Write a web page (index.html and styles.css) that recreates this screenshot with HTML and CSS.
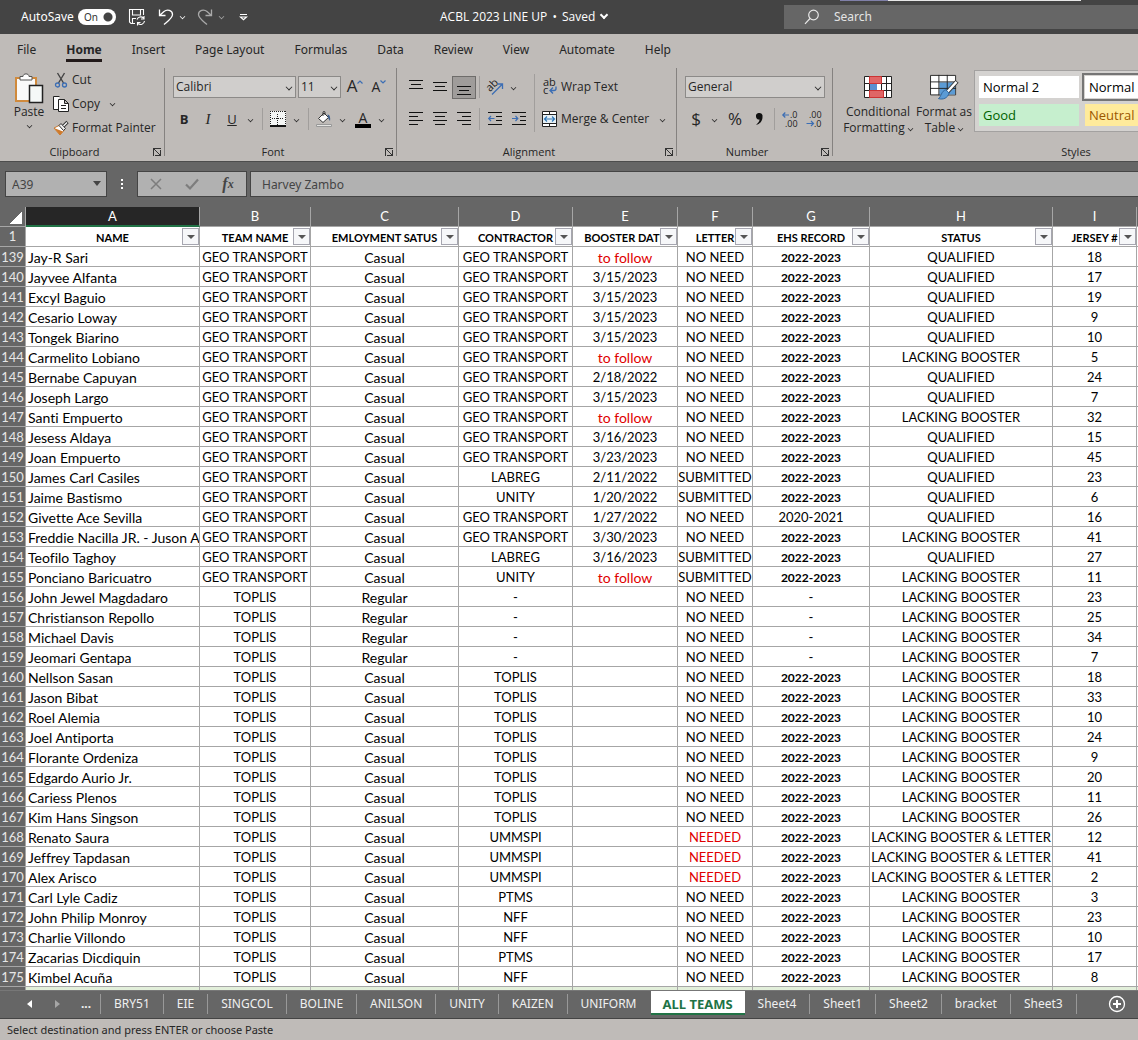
FILE: index.html
```html
<!DOCTYPE html>
<html lang="en">
<head>
    <meta charset="UTF-8">
    <meta name="viewport" content="width=device-width, initial-scale=1.0">
    <title>ACBL 2023 LINE UP</title>
    <link rel="stylesheet" href="styles.css">
</head>
<body>
    <header class="titlebar">
        <div class="quick">
            <label for="autosave">AutoSave</label>
            <span class="toggle"><input type="checkbox" id="autosave" checked><span class="toggle-text">On</span></span>
            <button class="quick-save" aria-label="Save">
                <svg width="18" height="18" viewBox="0 0 18 18" fill="none" stroke="#fff" stroke-width="1.1"><path d="M7 15.500H3L1.500 14V1.500H15.500V7M4.500 1.500V7H12.500V1.500M4.500 15.500V10.500H8M9 11.500A4 4 0 0 1 15.500 10M16 8V11H13M16.500 13A4 4 0 0 1 10 15.500M9.500 17.500V14.500H12.500"/></svg>
            </button>
            <button class="quick-undo" aria-label="Undo">
                <svg width="16" height="18" viewBox="0 0 16 18" fill="none" stroke="#fff" stroke-width="1.300"><path d="M1.500 1.500V7.500H7.500M1.500 7.500L6 3.500C9 1 14.500 2 14.500 6.500C14.500 10 10 13 6 16.500"/></svg>
            </button>
            <span class="chev light"></span>
            <button class="quick-redo" aria-label="Redo">
                <svg width="16" height="18" viewBox="0 0 16 18" fill="none" stroke="#a9a9a9" stroke-width="1.300"><path d="M14.500 1.500V7.500H8.500M14.500 7.500L10 3.500C7 1 1.500 2 1.500 6.500C1.500 10 6 13 10 16.500"/></svg>
            </button>
            <span class="chev light dim"></span>
            <button class="quick-more" aria-label="Customize Quick Access Toolbar">
                <svg width="9" height="8" viewBox="0 0 9 8" fill="none" stroke="#fff" stroke-width="1.200"><path d="M1 1.500H8M1.500 4L4.500 6.800L7.500 4Z"/></svg>
            </button>
        </div>
        <div class="doc-title">ACBL 2023 LINE UP <span class="dot">•</span> Saved <span class="chev light bold"></span></div>
        <div class="search">
            <svg width="16" height="16" viewBox="0 0 16 16" fill="none" stroke="#e8e8e8" stroke-width="1.200"><circle cx="9.500" cy="6" r="4.800"/><path d="M6 9.500L1 14.800"/></svg>
            <input type="text" placeholder="Search" aria-label="Search">
        </div>
        <span class="edge"></span>
    </header>

    <nav class="menu">
        <a href="#">File</a>
        <a href="#" class="current">Home</a>
        <a href="#">Insert</a>
        <a href="#">Page Layout</a>
        <a href="#">Formulas</a>
        <a href="#">Data</a>
        <a href="#">Review</a>
        <a href="#">View</a>
        <a href="#">Automate</a>
        <a href="#">Help</a>
    </nav>

    <div class="ribbon">
        <section class="group clipboard">
            <div class="group-body">
                <button class="paste">
                    <svg width="30" height="32" viewBox="0 0 30 32"><path d="M2 6H22V29H2Z" fill="#fafafa" stroke="#d08a3c" stroke-width="2"/><path d="M6 8V4.500H9C9 1 15 1 15 4.500H18V8Z" fill="#fff" stroke="#555"/><path d="M15.500 13.500H28.500V30.500H15.500Z" fill="#f5f8f7" stroke="#222" stroke-width="1.500"/></svg>
                    <span>Paste</span>
                    <span class="chev"></span>
                </button>
                <div class="clip-list">
                    <button>
                        <svg width="16" height="16" viewBox="0 0 16 16" fill="none"><path d="M4.500 1L10.500 11M11.500 1L5.500 11" stroke="#444" stroke-width="1.400"/><circle cx="4.500" cy="13" r="2" stroke="#3c6eb4" stroke-width="1.300"/><circle cx="11.500" cy="13" r="2" stroke="#3c6eb4" stroke-width="1.300"/></svg>
                        Cut
                    </button>
                    <button>
                        <svg width="16" height="16" viewBox="0 0 16 16" fill="#fff" stroke="#222"><path d="M5.500 13.500H.5V.5H6.500"/><path d="M5.500 3.500H11.500L15.500 7.500V15.500H5.500ZM11.500 3.500V7.500H15.500M8 9.500H13M8 12.500H13"/></svg>
                        Copy <span class="chev far"></span>
                    </button>
                    <button>
                        <svg width="16" height="16" viewBox="0 0 16 16"><path d="M1 8L7 5L11.500 10L7 15Z" fill="#fff" stroke="#c77a33"/><path d="M1 8L10 11.500L7 15Z" fill="#cf7a2b"/><path d="M6 5.500L8 3.500L12.500 8.500L10.500 10.500Z" fill="#eee" stroke="#333"/><path d="M10.500 6L14.500 2" stroke="#333" stroke-width="3.200"/><path d="M10.500 6L14 2.500" stroke="#fff" stroke-width="1.200"/></svg>
                        Format Painter
                    </button>
                </div>
            </div>
            <div class="group-name">Clipboard<button class="launcher" aria-label="Clipboard settings"></button></div>
        </section>

        <section class="group font">
            <div class="group-body rows">
                <div class="row">
                    <span class="select-box font-name"><select aria-label="Font"><option>Calibri</option></select></span>
                    <span class="select-box font-size"><select aria-label="Font Size"><option>11</option></select></span>
                    <button class="tool grow" aria-label="Increase Font Size">A<svg width="6" height="4" viewBox="0 0 6 4" fill="none" stroke="#3c6eb4" stroke-width="1.200"><path d="M.5 3.500L3 1L5.500 3.500"/></svg></button>
                    <button class="tool shrink" aria-label="Decrease Font Size">A<svg width="6" height="4" viewBox="0 0 6 4" fill="none" stroke="#3c6eb4" stroke-width="1.200"><path d="M.5 .5L3 3L5.500 .5"/></svg></button>
                </div>
                <div class="row">
                    <button class="tool"><b>B</b></button>
                    <button class="tool"><i class="serif">I</i></button>
                    <button class="tool"><u>U</u></button>
                    <span class="drop"><span class="chev"></span></span>
                    <span class="sep"></span>
                    <button class="tool" aria-label="Borders">
                        <svg width="16" height="16" viewBox="0 0 16 16"><path d="M0 0H16V16H0Z" fill="#f4f6f5"/><path d="M.5 0V15M15.500 0V15M0 .5H16M7.500 3V14M2 7.500H14" stroke="#222" stroke-dasharray="1 1"/><path d="M0 15H16" stroke="#111" stroke-width="2"/></svg>
                    </button>
                    <span class="drop"><span class="chev"></span></span>
                    <span class="sep"></span>
                    <button class="tool" aria-label="Fill Color">
                        <svg width="16" height="16" viewBox="0 0 16 16" fill="none"><path d="M2.500 7.500L8 2L12.500 6.500L7 11.500Z" fill="#fff" stroke="#333"/><path d="M7 5V1.500C7 0 9 0 9 1.500V4" stroke="#333"/><path d="M11.500 3.500C14 3.500 14.500 7 14 10L12 7Z" fill="#3f5f8a"/><path d="M.5 13.500H15.500V15.500H.5Z" fill="#e4e4e2" stroke="#999"/></svg>
                    </button>
                    <span class="drop"><span class="chev"></span></span>
                    <button class="tool font-color" aria-label="Font Color"><span>A</span></button>
                    <span class="drop"><span class="chev"></span></span>
                </div>
            </div>
            <div class="group-name">Font<button class="launcher" aria-label="Font settings"></button></div>
        </section>

        <section class="group alignment">
            <div class="group-body">
                <div class="rows">
                    <div class="row">
                        <button class="tool" aria-label="Top Align"><svg width="14" height="16" viewBox="0 0 14 16" stroke="#111"><path d="M0 1.500H14M2 5.500H12M0 9.500H14"/></svg></button>
                        <button class="tool" aria-label="Middle Align"><svg width="14" height="16" viewBox="0 0 14 16" stroke="#111"><path d="M0 3.500H14M2 7.500H12M0 11.500H14"/></svg></button>
                        <button class="tool pressed" aria-label="Bottom Align"><svg width="14" height="16" viewBox="0 0 14 16" stroke="#111"><path d="M0 7.500H14M2 11.500H12M0 15.500H14"/></svg></button>
                        <span class="sep tight"></span>
                        <button class="tool" aria-label="Orientation"><svg width="18" height="18" viewBox="0 0 18 18" fill="none"><text x="0" y="11" transform="rotate(-45 6 8)" font-size="11" fill="#222">ab</text><path d="M6 16.500L16 6.500M11.500 6H16.500V11" stroke="#3c6eb4" stroke-width="1.300"/></svg></button>
                        <span class="drop"><span class="chev"></span></span>
                    </div>
                    <div class="row">
                        <button class="tool" aria-label="Align Left"><svg width="14" height="14" viewBox="0 0 14 14" stroke="#111"><path d="M0 .5H14M0 4.500H9M0 8.500H14M0 12.500H9"/></svg></button>
                        <button class="tool" aria-label="Center"><svg width="14" height="14" viewBox="0 0 14 14" stroke="#111"><path d="M0 .5H14M2 4.500H12M0 8.500H14M2 12.500H12"/></svg></button>
                        <button class="tool" aria-label="Align Right"><svg width="14" height="14" viewBox="0 0 14 14" stroke="#111"><path d="M0 .5H14M5 4.500H14M0 8.500H14M5 12.500H14"/></svg></button>
                        <span class="sep tight"></span>
                        <button class="tool" aria-label="Decrease Indent"><svg width="14" height="14" viewBox="0 0 14 14" fill="none" stroke="#111"><path d="M0 .5H14M8 4.500H14M8 8.500H14M0 12.500H14"/><path d="M6.500 6.500H.8M3 4L.7 6.500L3 9" stroke="#3c6eb4" stroke-width="1.200"/></svg></button>
                        <button class="tool" aria-label="Increase Indent"><svg width="14" height="14" viewBox="0 0 14 14" fill="none" stroke="#111"><path d="M0 .5H14M8 4.500H14M8 8.500H14M0 12.500H14"/><path d="M0 6.500H5.700M3.500 4L5.800 6.500L3.500 9" stroke="#3c6eb4" stroke-width="1.200"/></svg></button>
                    </div>
                </div>
                <span class="sep tall"></span>
                <div class="rows">
                    <div class="row">
                        <button class="wide"><svg width="18" height="18" viewBox="0 0 18 18" fill="none"><text x="2" y="8" font-size="11" fill="#222">ab</text><text x="2" y="16" font-size="11" fill="#222">c</text><path d="M15 8.500V10.500C15 12 14 12.500 13 12.500H9.500M12 9.500L9 12.500L12 15.500" stroke="#3c6eb4" stroke-width="1.400"/></svg>Wrap Text</button>
                    </div>
                    <div class="row">
                        <button class="wide"><svg width="18" height="16" viewBox="0 0 18 16" fill="none"><path d="M1.500 .5H15.500V15.500H1.500Z" fill="#fff" stroke="#222"/><path d="M1 3.500H16M1 12.500H16M8.500 0V3M8.500 13V16" stroke="#222"/><path d="M2 4H15V12H2Z" fill="#e6f0f5"/><path d="M3.500 8H13.500M6 5.500L3.500 8L6 10.500M11 5.500L13.500 8L11 10.500" stroke="#2e75b6" stroke-width="1.200"/></svg>Merge &amp; Center</button>
                        <span class="drop"><span class="chev"></span></span>
                    </div>
                </div>
            </div>
            <div class="group-name">Alignment<button class="launcher" aria-label="Alignment settings"></button></div>
        </section>

        <section class="group number">
            <div class="group-body rows">
                <div class="row">
                    <span class="select-box number-format"><select aria-label="Number Format"><option>General</option></select></span>
                </div>
                <div class="row">
                    <button class="tool large">$</button>
                    <span class="drop"><span class="chev"></span></span>
                    <button class="tool large percent">%</button>
                    <button class="tool" aria-label="Comma Style"><svg width="10" height="14" viewBox="0 0 10 14"><path d="M4.500 1A3.300 3.300 0 0 1 8.500 5C8.500 9 6 12 2 13C4 11 5.500 9.500 5.500 7.500A3.300 3.300 0 0 1 4.500 1Z" fill="#111"/></svg></button>
                    <span class="sep tight"></span>
                    <button class="tool" aria-label="Increase Decimal"><svg width="17" height="18" viewBox="0 0 17 18" fill="none"><path d="M7 5H.8M3.300 2.500L.8 5L3.300 7.500" stroke="#3c6eb4" stroke-width="1.200"/><text x="8" y="8" font-size="9" fill="#222">.0</text><text x="3" y="17" font-size="9" fill="#222">.00</text></svg></button>
                    <button class="tool" aria-label="Decrease Decimal"><svg width="17" height="18" viewBox="0 0 17 18" fill="none"><text x="3" y="8" font-size="9" fill="#222">.00</text><path d="M.5 13.500H7.500M5 11L7.500 13.500L5 16" stroke="#3c6eb4" stroke-width="1.200"/><text x="8" y="17" font-size="9" fill="#222">.0</text></svg></button>
                </div>
            </div>
            <div class="group-name">Number<button class="launcher" aria-label="Number settings"></button></div>
        </section>

        <section class="group styles">
            <div class="group-body">
                <button class="big">
                    <svg width="28" height="24" viewBox="0 0 28 24"><path d="M.5 1.500H27.500V22.500H.5Z" fill="#fff" stroke="#222"/><path d="M0 8.500H28M0 15.500H28M5.500 1V23M17.500 1V23M22.500 1V23" stroke="#222"/><path d="M5.500 1.500H17.500V8.500H5.500ZM5.500 15.500H19.500V22.500H5.500Z" fill="#e06666" stroke="#c33"/><path d="M6 9H13V15H6Z" fill="#5b8fd0"/></svg>
                    <span>Conditional<br>Formatting <span class="chev"></span></span>
                </button>
                <button class="big">
                    <svg width="30" height="28" viewBox="0 0 30 28"><path d="M.5 1.500H27.500V22.500H.5Z" fill="#fff" stroke="#222"/><path d="M10 9H27V22H10Z" fill="#5b9bd5"/><path d="M0 8.500H28M0 15.500H28M9.500 1V23M18.500 1V23" stroke="#222"/><path d="M29 8L18 20" stroke="#333" stroke-width="4.500"/><path d="M28.500 8.500L18 20" stroke="#fff" stroke-width="2.500"/><path d="M17 17L20.500 20.500C19 26 14 28 9 26.500C12 25 12 18 17 17Z" fill="#5b9bd5" stroke="#2d6299"/></svg>
                    <span>Format as<br>Table <span class="chev"></span></span>
                </button>
                <div class="gallery">
                    <button class="style-item">Normal 2</button>
                    <button class="style-item selected">Normal</button>
                    <button class="style-item good">Good</button>
                    <button class="style-item neutral">Neutral</button>
                </div>
            </div>
            <div class="group-name">Styles</div>
        </section>
    </div>

    <div class="formula-bar">
        <div class="name-box"><input type="text" value="A39" aria-label="Name Box"><span class="tri"></span></div>
        <div class="dots"><i></i><i></i><i></i></div>
        <div class="fx-box">
            <button aria-label="Cancel"><svg width="12" height="12" viewBox="0 0 12 12" stroke="#7d7d7d" stroke-width="1.500"><path d="M1 1L11 11M11 1L1 11"/></svg></button>
            <button aria-label="Enter"><svg width="14" height="12" viewBox="0 0 14 12" fill="none" stroke="#7d7d7d" stroke-width="2.200"><path d="M1 6.500L5 10.500L13 1.500"/></svg></button>
            <button class="fx" aria-label="Insert Function">f<sub>x</sub></button>
        </div>
        <input class="formula" type="text" value="Harvey Zambo" aria-label="Formula Bar">
    </div>

    <main class="sheet">
        <table>
            <colgroup>
                <col class="col-num"><col class="col-a"><col class="col-b"><col class="col-c"><col class="col-d"><col class="col-e"><col class="col-f"><col class="col-g"><col class="col-h"><col class="col-i"><col class="col-j">
            </colgroup>
            <thead>
                <tr class="letters"><th class="corner"></th><th class="active">A</th><th>B</th><th>C</th><th>D</th><th>E</th><th>F</th><th>G</th><th>H</th><th>I</th><th></th></tr>
                <tr class="titles" id="titles"></tr>
            </thead>
            <tbody id="rows"></tbody>
        </table>
    </main>

    <nav class="tabs">
        <button class="arrow left" aria-label="Previous sheet"></button>
        <button class="arrow right" aria-label="Next sheet"></button>
        <button class="more">...</button>
        <a href="#">BRY51</a>
        <a href="#">EIE</a>
        <a href="#">SINGCOL</a>
        <a href="#">BOLINE</a>
        <a href="#">ANILSON</a>
        <a href="#">UNITY</a>
        <a href="#">KAIZEN</a>
        <a href="#" class="before">UNIFORM</a>
        <a href="#" class="current">ALL TEAMS</a>
        <a href="#">Sheet4</a>
        <a href="#">Sheet1</a>
        <a href="#">Sheet2</a>
        <a href="#">bracket</a>
        <a href="#">Sheet3</a>
        <button class="add" aria-label="New sheet"><svg width="18" height="18" viewBox="0 0 18 18" fill="none" stroke="#fff"><circle cx="9" cy="9" r="7.500" stroke-width="1.300"/><path d="M9 5V13M5 9H13" stroke-width="2"/></svg></button>
    </nav>
    <footer class="status">Select destination and press ENTER or choose Paste</footer>

    <script>
        const titles = ['NAME', 'TEAM NAME', 'EMLOYMENT SATUS', 'CONTRACTOR', 'BOOSTER DATE', 'LETTER', 'EHS RECORD', 'STATUS', 'JERSEY #'];
        const G = 'GEO TRANSPORT';
        const T = 'TOPLIS';
        const Q = 'QUALIFIED';
        const L = 'LACKING BOOSTER';
        const LL = 'LACKING BOOSTER & LETTER';
        const Y = '2022-2023';

        // name, team, employment, contractor, booster, letter, ehs, status, jersey
        const players = [
            ['Jay-R Sari', G, 'Casual', G, 'to follow', 'NO NEED', Y, Q, 18],
            ['Jayvee Alfanta', G, 'Casual', G, '3/15/2023', 'NO NEED', Y, Q, 17],
            ['Excyl Baguio', G, 'Casual', G, '3/15/2023', 'NO NEED', Y, Q, 19],
            ['Cesario Loway', G, 'Casual', G, '3/15/2023', 'NO NEED', Y, Q, 9],
            ['Tongek Biarino', G, 'Casual', G, '3/15/2023', 'NO NEED', Y, Q, 10],
            ['Carmelito Lobiano', G, 'Casual', G, 'to follow', 'NO NEED', Y, L, 5],
            ['Bernabe Capuyan', G, 'Casual', G, '2/18/2022', 'NO NEED', Y, Q, 24],
            ['Joseph Largo', G, 'Casual', G, '3/15/2023', 'NO NEED', Y, Q, 7],
            ['Santi Empuerto', G, 'Casual', G, 'to follow', 'NO NEED', Y, L, 32],
            ['Jesess Aldaya', G, 'Casual', G, '3/16/2023', 'NO NEED', Y, Q, 15],
            ['Joan Empuerto', G, 'Casual', G, '3/23/2023', 'NO NEED', Y, Q, 45],
            ['James Carl Casiles', G, 'Casual', 'LABREG', '2/11/2022', 'SUBMITTED', Y, Q, 23],
            ['Jaime Bastismo', G, 'Casual', 'UNITY', '1/20/2022', 'SUBMITTED', Y, Q, 6],
            ['Givette Ace Sevilla', G, 'Casual', G, '1/27/2022', 'NO NEED', '2020-2021', Q, 16],
            ['Freddie Nacilla JR. - Juson A', G, 'Casual', G, '3/30/2023', 'NO NEED', Y, L, 41],
            ['Teofilo Taghoy', G, 'Casual', 'LABREG', '3/16/2023', 'SUBMITTED', Y, Q, 27],
            ['Ponciano Baricuatro', G, 'Casual', 'UNITY', 'to follow', 'SUBMITTED', Y, L, 11],
            ['John Jewel Magdadaro', T, 'Regular', '-', '', 'NO NEED', '-', L, 23],
            ['Christianson Repollo', T, 'Regular', '-', '', 'NO NEED', '-', L, 25],
            ['Michael Davis', T, 'Regular', '-', '', 'NO NEED', '-', L, 34],
            ['Jeomari Gentapa', T, 'Regular', '-', '', 'NO NEED', '-', L, 7],
            ['Nellson Sasan', T, 'Casual', T, '', 'NO NEED', Y, L, 18],
            ['Jason Bibat', T, 'Casual', T, '', 'NO NEED', Y, L, 33],
            ['Roel Alemia', T, 'Casual', T, '', 'NO NEED', Y, L, 10],
            ['Joel Antiporta', T, 'Casual', T, '', 'NO NEED', Y, L, 24],
            ['Florante Ordeniza', T, 'Casual', T, '', 'NO NEED', Y, L, 9],
            ['Edgardo Aurio Jr.', T, 'Casual', T, '', 'NO NEED', Y, L, 20],
            ['Cariess Plenos', T, 'Casual', T, '', 'NO NEED', Y, L, 11],
            ['Kim Hans Singson', T, 'Casual', T, '', 'NO NEED', Y, L, 26],
            ['Renato Saura', T, 'Casual', 'UMMSPI', '', 'NEEDED', Y, LL, 12],
            ['Jeffrey Tapdasan', T, 'Casual', 'UMMSPI', '', 'NEEDED', Y, LL, 41],
            ['Alex Arisco', T, 'Casual', 'UMMSPI', '', 'NEEDED', Y, LL, 2],
            ['Carl Lyle Cadiz', T, 'Casual', 'PTMS', '', 'NO NEED', Y, L, 3],
            ['John Philip Monroy', T, 'Casual', 'NFF', '', 'NO NEED', Y, L, 23],
            ['Charlie Villondo', T, 'Casual', 'NFF', '', 'NO NEED', Y, L, 10],
            ['Zacarias Dicdiquin', T, 'Casual', 'PTMS', '', 'NO NEED', Y, L, 17],
            ['Kimbel Acuña', T, 'Casual', 'NFF', '', 'NO NEED', Y, L, 8]
        ];

        function addCell(row, tag, text, className) {
            const cell = document.createElement(tag);
            cell.textContent = text;
            if (className) cell.className = className;
            row.appendChild(cell);
            return cell;
        }

        function createTitles() {
            const row = document.getElementById('titles');
            addCell(row, 'th', '1', 'num');
            titles.forEach(title => {
                const cell = addCell(row, 'th', '');
                const box = document.createElement('div');
                box.classList.add('title-box');
                box.innerHTML = `<span>${title}</span><button class="filter" aria-label="Filter ${title}"></button>`;
                cell.appendChild(box);
            });
            addCell(row, 'th', '');
        }

        function createRows() {
            const body = document.getElementById('rows');
            players.forEach((player, i) => {
                const row = document.createElement('tr');
                addCell(row, 'th', 139 + i, 'num');
                player.forEach((value, col) => {
                    let className = '';
                    if (col === 0 || col === 2) className = 'mixed';
                    if (value === 'to follow') className = 'mixed red';
                    if (value === 'NEEDED') className = 'red';
                    if (value === Y) className = 'strong';
                    addCell(row, 'td', value, className);
                });
                addCell(row, 'td', '');
                body.appendChild(row);
            });

            // next team starts on an empty green row
            const last = document.createElement('tr');
            last.classList.add('green');
            addCell(last, 'th', '', 'num');
            for (let i = 0; i < 10; i++) addCell(last, 'td', '');
            body.appendChild(last);
        }

        createTitles();
        createRows();
    </script>
</body>
</html>
```
FILE: styles.css
```css
* {
    box-sizing: border-box;
}
body {
    margin: 0;
    height: 100vh;
    display: flex;
    flex-direction: column;
    overflow: hidden;
    font-family: "Noto Sans", "Open Sans", sans-serif;
    font-size: 12px;
    line-height: 16px;
    color: #262626;
    background-color: #666;
}
button, input, select {
    font: inherit;
    color: inherit;
    background: none;
    border: none;
    border-radius: 0;
    padding: 0;
    margin: 0;
}
button {
    display: flex;
    align-items: center;
    white-space: nowrap;
}
a {
    color: inherit;
    text-decoration: none;
}
svg {
    flex: none;
    display: block;
    overflow: visible;
}
.chev {
    display: inline-block;
    flex: none;
    width: 5px;
    height: 5px;
    border-right: 1px solid #262626;
    border-bottom: 1px solid #262626;
    transform: translateY(-1px) rotate(45deg) scale(0.8);
}
.chev.light {
    border-color: #fff;
}
.chev.dim {
    border-color: #a9a9a9;
}
.chev.bold {
    width: 6px;
    height: 6px;
    border-width: 0 2px 2px 0;
}

/* title bar */
.titlebar {
    position: relative;
    flex: none;
    height: 34px;
    display: grid;
    grid-template-columns: 440px 344px 1fr;
    align-items: center;
    background-color: #444;
    color: #fff;
}
.quick {
    display: flex;
    align-items: center;
    padding-left: 21px;
}
.toggle {
    position: relative;
    width: 38px;
    height: 16px;
    margin-left: 4px;
}
.toggle input {
    appearance: none;
    display: block;
    width: 38px;
    height: 16px;
    border-radius: 8px;
    background: radial-gradient(circle at 30px 8px, #444 4px, #fff 5px);
}
.toggle-text {
    position: absolute;
    left: 6px;
    top: 0;
    font-size: 10px;
    color: #333;
    pointer-events: none;
}
.quick-save {
    margin-left: 12px;
}
.quick-undo {
    margin: 0 6px 0 12px;
}
.quick-redo {
    margin: 0 6px 0 12px;
}
.quick-more {
    margin-left: 15px;
}
.doc-title {
    font-family: "Open Sans", sans-serif;
    white-space: nowrap;
}
.dot {
    margin: 0 2px;
}
.doc-title .chev {
    margin-left: 3px;
    transform: translateY(-3px) rotate(45deg);
}
.search {
    display: flex;
    align-items: center;
    gap: 14px;
    height: 24px;
    padding-left: 20px;
    background-color: #666;
}
.search input {
    flex: 1;
    min-width: 0;
}
.search input::placeholder {
    color: #e4e4e4;
}
.edge {
    position: absolute;
    left: 840px;
    top: 0;
    width: 241px;
    height: 1px;
    background: linear-gradient(to right, #8080a8 48px, #e8e8e8 48px);
}

/* menu */
.menu {
    flex: none;
    display: flex;
    gap: 30px;
    height: 32px;
    padding-left: 17px;
    background-color: #bfbbb8;
    white-space: nowrap;
}
.menu a {
    height: 28px;
    padding-top: 8px;
}
.menu .current {
    font-weight: bold;
    border-bottom: 3px solid #221a1a;
}

/* ribbon */
.ribbon {
    flex: none;
    display: flex;
    height: 96px;
    overflow: hidden;
    background-color: #bfbbb8;
    border-bottom: 1px solid #4d4d4d;
    font-family: "Open Sans", sans-serif;
}
.group {
    position: relative;
    flex: none;
    display: flex;
    flex-direction: column;
    height: 95px;
}
.group::after {
    content: "";
    position: absolute;
    right: 0;
    top: 2px;
    bottom: 5px;
    width: 1px;
    background-color: #858280;
}
.group-body {
    flex: 1;
    display: flex;
}
.group-name {
    position: relative;
    height: 17px;
    padding-right: 16px;
    text-align: center;
    font-size: 11px;
}
.launcher {
    position: absolute;
    right: 4px;
    top: 4px;
    width: 8px;
    height: 8px;
    border-left: 1px solid #333;
    border-top: 1px solid #333;
    background: linear-gradient(45deg, transparent 44%, #333 44%, #333 56%, transparent 56%);
    background: linear-gradient(to top right, transparent 44%, #333 44%, #333 56%, transparent 56%);
}
.launcher::after {
    content: "";
    position: absolute;
    right: 0;
    bottom: 0;
    width: 5px;
    height: 5px;
    border-right: 1px solid #333;
    border-bottom: 1px solid #333;
}
.clipboard {
    width: 165px;
}
.font {
    width: 232px;
}
.alignment {
    width: 280px;
}
.number {
    width: 156px;
}
.styles {
    width: 486px;
}
.styles .group-name {
    padding-right: 0;
}
.rows {
    display: flex;
    flex-direction: column;
    gap: 10px;
    padding-top: 10px;
}
.row {
    display: flex;
    align-items: center;
    height: 22px;
}
.paste {
    flex-direction: column;
    width: 40px;
    height: 62px;
    margin: 6px 0 0 9px;
}
.paste .chev {
    margin-top: 4px;
}
.clip-list {
    padding: 2px 0 0 4px;
}
.clip-list button {
    height: 24px;
    gap: 3px;
}
.clip-list .far {
    margin-left: 7px;
}
.font .group-body, .number .group-body, .alignment .group-body {
    padding-left: 7px;
}
.select-box {
    position: relative;
    height: 22px;
}
.select-box select {
    appearance: none;
    display: block;
    width: 100%;
    height: 22px;
    padding-left: 2px;
    border: 1px solid #8c8a88;
    background-color: #d0cecc;
}
.select-box::after {
    content: "";
    position: absolute;
    right: 4px;
    top: 8px;
    width: 5px;
    height: 5px;
    border-right: 1px solid #262626;
    border-bottom: 1px solid #262626;
    transform: rotate(45deg) scale(0.8);
    pointer-events: none;
}
.font-name {
    width: 123px;
    margin-left: 1px;
}
.font-size {
    width: 43px;
    margin: 0 2px;
}
.number-format {
    width: 140px;
    margin-left: 1px;
}
.tool {
    flex: none;
    justify-content: center;
    width: 24px;
    height: 22px;
    font-size: 13px;
}
.tool.large {
    font-size: 17px;
}
.percent {
    margin-left: 3px;
}
.grow {
    font-size: 17px;
    align-items: flex-start;
    line-height: 20px;
}
.shrink {
    font-size: 14px;
    align-items: flex-start;
    line-height: 22px;
}
.grow svg, .shrink svg {
    margin-top: 4px;
}
.serif {
    font-family: "Liberation Serif", serif;
    font-size: 15px;
}
.drop {
    flex: none;
    width: 12px;
    text-align: center;
    line-height: 12px;
}
.font-color {
    margin-left: 3px;
}
.font-color span {
    width: 16px;
    font-size: 14px;
    line-height: 13px;
    border-bottom: 4px solid #000;
}
.pressed {
    height: 23px;
    background-color: #9f9c9a;
    border: 1px solid #6e6c6a;
}
.sep {
    flex: none;
    width: 1px;
    height: 22px;
    margin: 0 3px 0 6px;
    background-color: #a19e9c;
}
.sep.tight {
    margin-left: 3px;
}
.sep.tall {
    height: 58px;
    margin: 8px 6px 0 3px;
}
.wide {
    gap: 2px;
}
.wide + .drop {
    margin-left: 7px;
}
.big {
    flex-direction: column;
    width: 70px;
    height: 62px;
    margin: 8px 0 0 10px;
}
.big svg {
    height: 30px;
    padding-bottom: 4px;
}
.big + .big {
    width: 60px;
    margin-left: 1px;
}
.gallery {
    display: grid;
    grid-template-columns: 100px 100px;
    grid-template-rows: 22px 22px;
    gap: 6px;
    width: 330px;
    height: 62px;
    margin-top: 4px;
    padding: 5px 4px;
    background-color: #d4d2d0;
    border: 1px solid #a3a1a0;
}
.style-item {
    padding-left: 4px;
    font-size: 13px;
    background-color: #fff;
    color: #000;
}
.style-item.selected {
    outline: 2px solid #757575;
    outline-offset: 1px;
}
.style-item.good {
    background-color: #c6efce;
    color: #006100;
}
.style-item.neutral {
    background-color: #ffeb9c;
    color: #9c5700;
}

/* formula bar */
.formula-bar {
    flex: none;
    display: flex;
    height: 45px;
    padding: 9px 0 10px 5px;
    background-color: #666;
    color: #444;
}
.name-box {
    position: relative;
    width: 102px;
}
.name-box input {
    width: 100%;
    height: 26px;
    padding-left: 6px;
    border: 1px solid #444;
    background-color: #b1b1b1;
}
.tri {
    position: absolute;
    right: 6px;
    top: 10px;
    border: 4px solid transparent;
    border-top: 5px solid #444;
}
.dots {
    display: flex;
    flex-direction: column;
    align-items: center;
    justify-content: center;
    gap: 2px;
    width: 30px;
}
.dots i {
    width: 2px;
    height: 2px;
    background-color: #fff;
}
.fx-box {
    display: flex;
    width: 110px;
    height: 26px;
    margin-right: 3px;
    border: 1px solid #444;
    background-color: #b1b1b1;
}
.fx-box button {
    flex: 1;
    justify-content: center;
}
.fx {
    font-family: "Liberation Serif", serif;
    font-style: italic;
    font-weight: bold;
    font-size: 16px;
}
.fx sub {
    font-size: 12px;
}
.formula {
    flex: 1;
    min-width: 0;
    height: 26px;
    padding-left: 11px;
    border: 1px solid #444;
    border-right: none;
    background-color: #b1b1b1;
}

/* sheet */
.sheet {
    flex: 1;
    min-height: 0;
    overflow: hidden;
    background-color: #fff;
}
table {
    table-layout: fixed;
    width: 1201px;
    border-collapse: separate;
    border-spacing: 0;
    font-family: Lato, sans-serif;
    font-size: 13px;
    font-variant-ligatures: none;
    line-height: 17px;
    color: #000;
}
th, td {
    height: 20px;
    padding: 2px 0 0;
    border-right: 1px solid #a6a6a6;
    border-bottom: 1px solid #a6a6a6;
    text-align: center;
    white-space: nowrap;
    overflow: hidden;
}
.col-num { width: 26px; }
.col-a { width: 174px; }
.col-b { width: 111px; }
.col-c { width: 148px; }
.col-d { width: 114px; }
.col-e { width: 105px; }
.col-f { width: 75px; }
.col-g { width: 117px; }
.col-h { width: 183px; }
.col-i { width: 84px; }
.col-j { width: 64px; }
td:nth-child(2) {
    padding-left: 2px;
    text-align: left;
}
.letters th {
    padding: 0;
    line-height: 19px;
    background-color: #666;
    color: #fff;
    font-weight: normal;
}
.letters .active {
    background-color: #262626;
    border-bottom: 2px solid #217346;
    line-height: 18px;
}
.letters .corner {
    background: linear-gradient(135deg, transparent 50%, #fff 50%) 10px 4px / 12px 13px no-repeat #666;
}
.num, .titles .num {
    background-color: #666;
    color: #e6e6e6;
    font-size: 13px;
    font-weight: normal;
}
.titles th {
    padding: 0;
    font-size: 11px;
}
.title-box {
    position: relative;
    height: 19px;
    padding-top: 2px;
}
.filter {
    position: absolute;
    right: 0;
    top: 1px;
    width: 17px;
    height: 17px;
    border: 1px solid #a6a6b0;
    background-color: #f6f7f9;
}
.filter::after {
    content: "";
    position: absolute;
    left: 4px;
    top: 6px;
    border: 4px solid transparent;
    border-top-color: #555;
}
.mixed {
    font-size: 14px;
}
.strong {
    font-size: 12px;
    font-weight: bold;
}
.red {
    color: #e00000;
}
.green td {
    background-color: #e2efda;
}

/* sheet tabs */
.tabs {
    flex: none;
    display: flex;
    height: 29px;
    padding-left: 27px;
    border-top: 1px solid #777;
    border-bottom: 1px solid #444;
    background-color: #666;
    color: #f0f0f0;
    white-space: nowrap;
}
.tabs a {
    height: 20px;
    margin-top: 3px;
    padding: 2px 13px 0;
    border-right: 1px solid #999;
}
.tabs .before {
    border-color: transparent;
}
.tabs .current {
    height: 24px;
    margin-top: 0;
    padding: 5px 12px 0;
    background-color: #fff;
    border-right: none;
    border-bottom: 2px solid #217346;
    color: #217346;
    font-size: 13px;
    font-weight: bold;
}
.arrow {
    width: 5px;
    height: 8px;
    margin-top: 9px;
    background-color: #fff;
    clip-path: polygon(100% 0, 100% 100%, 0 50%);
}
.arrow.right {
    margin-left: 23px;
    background-color: #a6a6a6;
    clip-path: polygon(0 0, 100% 50%, 0 100%);
}
.more {
    width: 41px;
    height: 20px;
    margin-top: 3px;
    padding-left: 12px;
    justify-content: center;
    border-right: 1px solid #999;
    font-weight: bold;
}
.add {
    height: 26px;
    margin-left: 31px;
}
.status {
    flex: none;
    height: 21px;
    padding: 3px 7px;
    background-color: #bfbbb8;
    font-size: 11px;
    line-height: 16px;
}
```
